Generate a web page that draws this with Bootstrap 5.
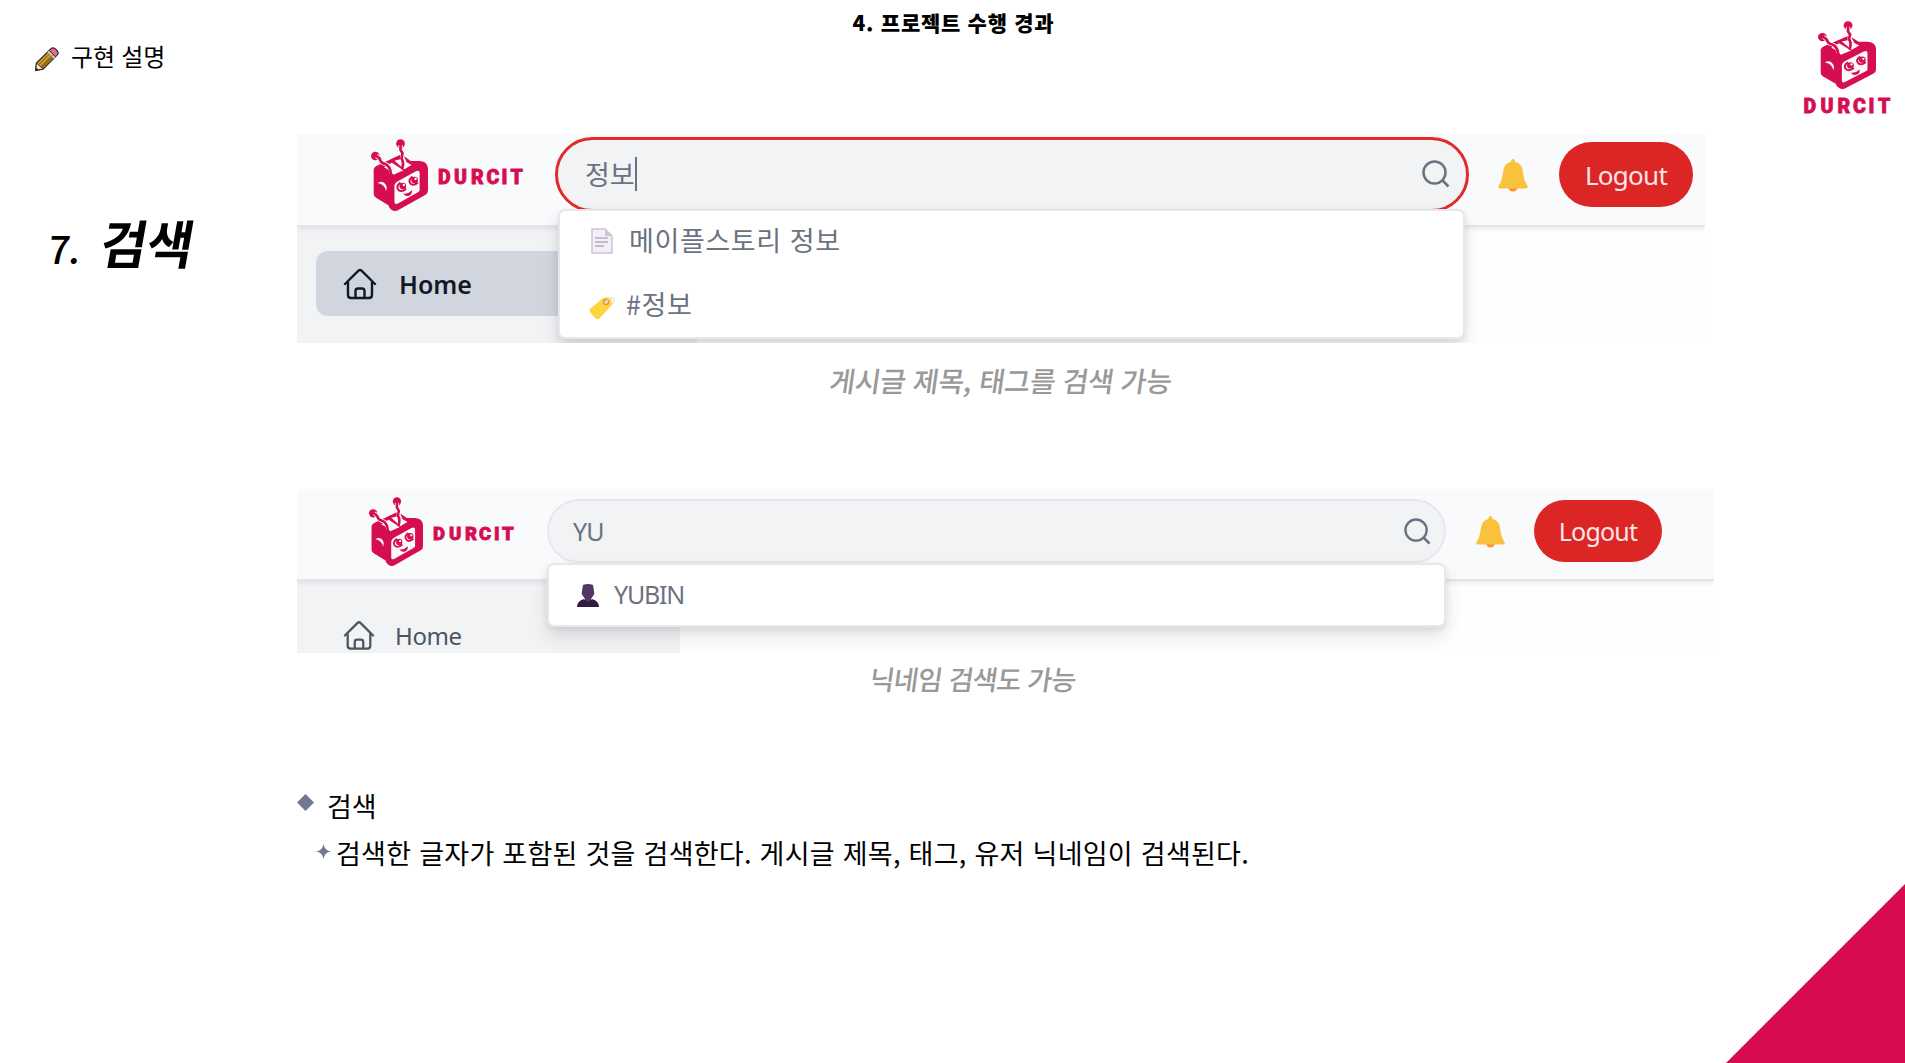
<!DOCTYPE html>
<html lang="ko">
<head>
<meta charset="utf-8">
<meta name="viewport" content="width=device-width, initial-scale=1">
<title>프로젝트 수행 경과</title>
<link href="https://cdn.jsdelivr.net/npm/bootstrap@5.3.0/dist/css/bootstrap.min.css" rel="stylesheet">
<style>
:root{--brand:#d60d52}
body{font-family:"Noto Sans","Noto Sans CJK KR",sans-serif;background:#fff;color:#000}
.slide{width:1905px;height:1063px}
.kr{font-family:"Noto Sans CJK KR",sans-serif}
.slide-top{height:134px}
.top-side{width:300px}
.topic{padding:38px 0 0 35px;height:74px;font-size:24px;gap:12px;line-height:36px;letter-spacing:-.2px}
.topic svg{margin-top:9px}
.slide-title{font-size:21px;font-weight:900;letter-spacing:.72px;line-height:30px;padding:7px 0 0 2px}
.brand-stack{padding:20px 14px 0 0}
.section-col{width:297px}
.hand{font-family:"Noto Sans CJK KR",sans-serif;font-weight:500}
.section-name{padding:79px 0 0 49px;line-height:58px;white-space:nowrap}
.section-name .num{font-size:38px;transform:skewX(-6deg);padding-top:6px;width:52px;font-weight:500;letter-spacing:-1px}
.section-name .word{font-size:52px;font-weight:700;transform:skewX(-10deg) scaleX(.97);transform-origin:left;letter-spacing:0}
.caption{color:#999;line-height:40px;white-space:nowrap;transform:skewX(-8deg)}
.caption-a{font-size:28px;width:1408px;margin-top:17px;letter-spacing:-.4px}
.caption-b{font-size:27px;width:1352px;margin-top:6px;letter-spacing:-.8px}
.shot{background:#fefefe;overflow:hidden;flex:none;color:#6b7280}
.shot-a{width:1408px;height:209px}
.shot-b{width:1417px;height:164px;margin-top:89px}
.bar{background:#f9fafc;height:93px;border-bottom:2px solid #e3e5e8;box-shadow:0 2px 5px rgba(0,0,0,.08);position:relative;z-index:2}
.shot-a .bar{padding-left:74px}
.shot-b .bar{padding-left:72px;height:92px}
.search{background:#f2f3f5;flex:none;position:relative}
.search-a{width:914px;height:75px;margin:3px 0 0 30px;border:3px solid #e12b2b;border-radius:38px;padding:0 16px 1px 27px;font-size:27px}
.search-b{width:899px;height:64px;margin:10px 0 0 31px;border:2px solid #e7e8ec;border-radius:32px;padding:0 13px 0 24px;font-size:25px}
.search-b>span{letter-spacing:-.8px;padding-top:2px}
.caret{width:2px;height:34px;background:#6b7280}
.results{position:absolute;background:#fff;border:2px solid #e5e7eb;border-radius:7px;box-shadow:0 10px 18px rgba(0,0,0,.1),0 3px 7px rgba(0,0,0,.08);z-index:5}
.results-a{left:0;top:69px;width:907px;height:130px;padding-left:31px;font-size:27px}
.results-a span{position:relative;top:-3px;letter-spacing:.6px}
.results-b{left:-2px;top:62px;width:899px;height:64px;padding-left:28px;font-size:25px;letter-spacing:-1.2px}
.result-line{height:64px}
.sign-out,.sign-out:hover{background:#dc2626;color:#fbe5e5;border:0;border-radius:33px;padding:2px 0 0;font-family:"Noto Sans",sans-serif}
.out-a{width:134px;height:65px;font-size:26px;margin:8px 0 0 31px;letter-spacing:-.75px}
.out-b{width:128px;height:62px;font-size:25px;margin:11px 0 0 29px;letter-spacing:-.8px}
.side{background:#f2f3f5}
.side-a{width:400px;height:116px;padding:24px 0 0 19px}
.side-b{width:383px;height:72px;padding:39px 0 0 46px;font-size:24px;color:#4b5563}
.menu-home{width:365px;height:65px;background:#d1d5dd;border-radius:12px;padding-left:27px;color:#111827;font-size:25px;font-weight:600;gap:22px}
.menu-home span{padding-top:2px}
.notes{margin-top:87px;font-size:27px;line-height:40px}
.note-sub{margin-top:7px;margin-left:19px;letter-spacing:.27px;white-space:nowrap}
.corner{position:absolute;right:0;bottom:0;width:179px;height:179px;background:var(--brand);clip-path:polygon(100% 0,100% 100%,0 100%)}
.wordmark{font-family:Roboto,sans-serif;font-weight:900;fill:var(--brand);stroke:var(--brand);stroke-width:.8}
svg{display:block;flex:none;overflow:visible}
</style>
</head>
<body>
<svg width="0" height="0" class="position-absolute" aria-hidden="true">
<defs>
<symbol id="robot" viewBox="0 0 170 216" preserveAspectRatio="none">
<g fill="#d60d52">
<circle cx="13" cy="51" r="13"/><circle cx="88" cy="14" r="13"/>
<path d="M8 91Q9 85 16 81L84 49Q90 46 96 50L119 66L139 66Q168 64 170 88V154Q170 162 163 167L83 212Q72 219 62 213Q54 209 52 199L15 176Q8 171 8 164Z"/>
</g>
<path d="M39 85L62 71L97 94L67 107Q59 95 39 85Z" fill="#fafafc"/>
<path d="M70 65L90 60L121 78L99 91Z" fill="#fafafc"/>
<path d="M16 51Q27 57 28 65Q31 72 43 75Q59 81 61 103M88 18V33L94 43L93 58Q104 71 96 87" fill="none" stroke="#fafafc" stroke-width="13"/>
<path d="M16 51Q27 57 28 65Q31 72 43 75Q57 82 59 103M88 18V33L94 43L91 58Q99 71 93 88" fill="none" stroke="#d60d52" stroke-width="8" stroke-linecap="round"/>
<path d="M70 139Q71 132 80 127L134 97Q145 92 145 102V153Q145 157 140 160L79 194Q70 198 70 189Z" fill="#fafafc"/>
<path d="M20 132Q36 122 44 137Q49 144 45 156Q40 135 20 132Z" fill="#fafafc"/>
<g fill="none" stroke="#d60d52" stroke-width="6"><path d="M88 131Q75 141 80 150Q88 163 105 149"/><path d="M124 113Q111 123 116 131Q123 144 140 131"/></g>
<g fill="#d60d52"><circle cx="95" cy="141" r="10"/><circle cx="130" cy="123" r="10"/><path d="M96 164Q110 167 122 154Q124 168 111 171Q102 173 96 164Z"/></g>
<circle cx="98" cy="138" r="3.500" fill="#fff"/><circle cx="133" cy="120" r="3.500" fill="#fff"/>
</symbol>
<symbol id="house" viewBox="0 0 34 32">
<path d="M2 16L15.500 2.600Q17 1.200 18.500 2.600L32 16M5 14V27Q5 30 8 30H26Q29 30 29 27V14M12.500 30V23Q12.500 20.500 15 20.500H19Q21.500 20.500 21.500 23V30" fill="none" stroke="currentColor" stroke-width="2.400" stroke-linecap="round" stroke-linejoin="round"/>
</symbol>
<symbol id="lens" viewBox="0 0 28 28"><circle cx="12.500" cy="12.500" r="11" fill="none" stroke="#6b7280" stroke-width="2.500"/><path d="M20.500 20.500L26.500 26.500" stroke="#6b7280" stroke-width="2.700"/></symbol>
<symbol id="bell" viewBox="0 0 30 33"><circle cx="15" cy="28" r="4.600" fill="#ff932e"/><path d="M13 3Q13 0 15 0T17 3Q24 4 25 13Q26 22 29 26Q31 29 28 29.500H2Q-1 29 1 26Q4 22 5 13Q6 4 13 3Z" fill="#f9c23c"/></symbol>
</defs>
</svg>

<main class="slide position-relative overflow-hidden d-flex flex-column">
<header class="slide-top d-flex justify-content-between align-items-start">
<div class="top-side topic d-flex kr">
<svg width="24" height="24" viewBox="0 0 24 24"><path d="M.7 23.300L1.500 16L16 1.700Q18-.1 21 2.500Q24.500 5.500 22 8L8 22Z" fill="#d99c2b" stroke="#333" stroke-width="1.400"/><path d="M6 20L19 7L21 8.500L8 21.500Z" fill="#9a6b1f"/><path d="M.7 23.300L1.500 16L8 22Z" fill="#fce8b5" stroke="#333"/><path d="M.5 23.500L1 20.500L3.500 23Z" fill="#222"/><path d="M16.300 1.700Q18.500.2 21 2.500Q24 5.500 22.500 7.700L20.500 9.500L14.500 3.500Z" fill="#ef6b8c" stroke="#333"/><path d="M13 4.500L19.500 11" stroke="#ccc" stroke-width="2"/><path d="M4 17.500L15 6.500M6 19.500L17.500 8" stroke="#4e3d20" stroke-width=".8"/></svg>
<span>구현 설명</span></div>
<h1 class="slide-title m-0 kr">4. 프로젝트 수행 경과</h1>
<div class="top-side brand-stack d-flex flex-column align-items-end">
<svg width="87" height="95" viewBox="0 0 87 95"><use href="#robot" x="14" y="1" width="58" height="68"/><text class="wordmark" y="92.500" x="-.5 16.500 33.500 49 64.500 74" font-size="19.500">DURCIT</text></svg>
</div>
</header>

<div class="d-flex">
<aside class="section-col"><h2 class="section-name hand m-0 d-flex"><span class="num">7.</span><span class="word">검색</span></h2></aside>
<div class="d-flex flex-column">

<section class="shot shot-a">
<div class="bar d-flex align-items-start">
<svg width="154" height="74" viewBox="0 0 154 74" class="mt-1"><use href="#robot" x="0" y="1" width="57" height="72"/><text class="wordmark" y="46" x="67 83 100 115.500 130.500 139.500" font-size="19.500">DURCIT</text></svg>
<div class="search search-a d-flex align-items-center">
<span class="kr">정보</span><span class="caret"></span>
<svg class="ms-auto" width="28" height="28"><use href="#lens"/></svg>
<div class="results results-a kr">
<div class="result-line d-flex align-items-center">
<svg width="22" height="26" viewBox="0 0 22 26" class="me-3 mb-1"><path d="M1 1H14L21 8V25H1Z" fill="#f3eef8" stroke="#cdc4d6" stroke-width="1.500"/><path d="M14 1V8H21Z" fill="#cdc4d6"/><path d="M4 10H17M4 14H17M4 18H13" stroke="#b4acbc" stroke-width="1.600"/></svg><span>메이플스토리 정보</span></div>
<div class="result-line d-flex align-items-center">
<svg width="26" height="24" viewBox="0 0 26 24" style="margin:2px 7px 0 -2px"><path d="M1 13L14 2Q20 0 22 3Q24 7 21 11L10 23Q8 24 6 22L1 16Q0 14 1 13Z" fill="#fcd53f"/><circle cx="17" cy="6" r="2.500" fill="#e5dccf" stroke="#f58a35" stroke-width="1.300"/><path d="M17 6Q22-1 25 3Q26 6 22 9" fill="none" stroke="#ddd" stroke-width="1.200"/></svg><span class="ms-1">#정보</span></div>
</div></div>
<svg width="30" height="33" style="margin:25px 0 0 29px"><use href="#bell"/></svg>
<button class="btn sign-out out-a">Logout</button>
</div>
<div class="side side-a"><div class="menu-home d-flex align-items-center"><svg width="34" height="32"><use href="#house"/></svg><span>Home</span></div></div>
</section>
<p class="caption caption-a hand text-center mb-0">게시글 제목, 태그를 검색 가능</p>

<section class="shot shot-b">
<div class="bar d-flex align-items-start">
<svg width="147" height="72" viewBox="0 0 147 72" class="mt-2"><use href="#robot" x="0" y="0" width="54" height="69"/><text class="wordmark" y="43" x="64 80 96 110 125 133" font-size="18.500">DURCIT</text></svg>
<div class="search search-b d-flex align-items-center">
<span>YU</span><svg class="ms-auto" width="27" height="27"><use href="#lens"/></svg>
<div class="results results-b d-flex align-items-center"><svg width="22" height="23" viewBox="0 0 22 23"><path d="M6 1Q11-1 16 1L17 7Q18 10 16 12L14 15V18H8V15L6 12Q4 10 5 7Z" fill="#533566"/><path d="M0 23Q0 17 7 15Q11 20 15 15Q22 17 22 23Z" fill="#321b41"/></svg><span style="margin-left:15px">YUBIN</span></div>
</div>
<svg width="29" height="32" style="margin:27px 0 0 30px"><use href="#bell"/></svg>
<button class="btn sign-out out-b">Logout</button>
</div>
<div class="side side-b d-flex align-items-start"><svg width="32" height="31"><use href="#house"/></svg><span class="lh-1" style="margin:4px 0 0 20px;letter-spacing:-.4px">Home</span></div>
</section>
<p class="caption caption-b hand text-center mb-0">닉네임 검색도 가능</p>

<section class="notes kr">
<div class="d-flex align-items-center"><svg width="17" height="17" viewBox="0 0 18 18" style="margin-bottom:7px"><path d="M9 0L18 9L9 18L0 9Z" fill="#6f7890"/></svg><span style="margin-left:13px">검색</span></div>
<div class="note-sub d-flex align-items-center"><svg width="15" height="15" viewBox="0 0 16 16" class="mb-1"><path d="M8 0Q9 7 16 8Q9 9 8 16Q7 9 0 8Q7 7 8 0Z" fill="#6f7890"/></svg><span style="margin-left:5px">검색한 글자가 포함된 것을 검색한다. 게시글 제목, 태그, 유저 닉네임이 검색된다.</span></div>
</section>
</div></div>
<div class="corner"></div>
</main>
<script src="https://cdn.jsdelivr.net/npm/bootstrap@5.3.0/dist/js/bootstrap.bundle.min.js"></script>
</body>
</html>
